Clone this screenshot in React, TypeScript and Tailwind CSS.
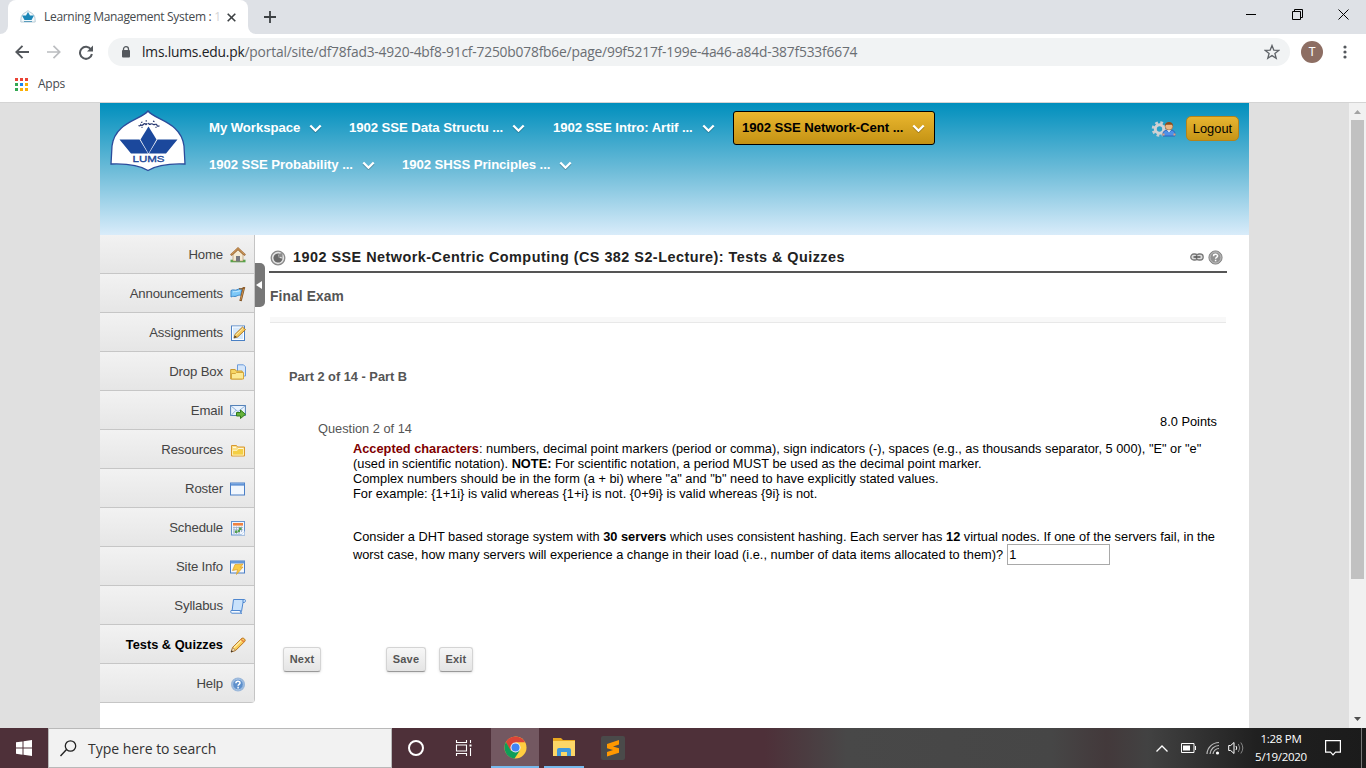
import React from "react";

const Chevron = () => (
  <svg className="mt-px h-[9px] w-[13px] shrink-0" viewBox="0 0 13 9">
    <path d="M1.3 2 6.5 7 11.7 2" transform="translate(0 .8)" fill="none" stroke="#00000040" strokeWidth="2.2" />
    <path d="M1.3 1.5 6.5 6.7 11.7 1.5" fill="none" stroke="#fff" strokeWidth="2.3" />
  </svg>
);

const NavItem = ({ label, width, className = "" }: { label: string; width: string; className?: string }) => (
  <div className={`flex items-center justify-between whitespace-nowrap text-[13.2px] font-bold tracking-[-0.080px] text-white ${width} ${className}`}>
    <span>{label}</span>
    <Chevron />
  </div>
);

const icons: Record<string, React.ReactNode> = {
  Home: (
    <>
      <path d="M.5 14h15" stroke="#56a34a" strokeWidth="2.6" />
      <path d="M3 7.5 8 3l5 4.5V14H3z" fill="#f4ead3" stroke="#b08b5a" strokeWidth=".6" />
      <path d="M6 14.500V9h4v5.500z" fill="#77777f" />
      <path d="M.8 8.3 8 1.6l7.2 6.7" fill="none" stroke="#a5713d" strokeWidth="2.2" />
      <path d="M1.500 7.500 8 1.500l6.500 6" fill="none" stroke="#dca866" strokeWidth=".8" />
    </>
  ),
  Announcements: (
    <>
      <path d="M1 4.500c2-1.500 4 .4 6-.7 2-1.200 3-1.200 5-.8l-1.300 6.300c-2-.5-3 .2-4.500.9-1.700.800-3-.600-5.200.800z" fill="#7cc8f8" stroke="#3b86c8" />
      <path d="M3 6c2-1 3 .5 7-1.300" stroke="#c6eaff" fill="none" />
      <path d="M14 1.300 10.500 15" stroke="#80501f" strokeWidth="2.400" />
      <path d="M13.800 2 10.700 14" stroke="#d59b57" strokeWidth=".9" />
      <path d="M9 2.600C11 3 13 3 15 1.600" stroke="#8d5b28" strokeWidth="1.200" fill="none" />
    </>
  ),
  Assignments: (
    <>
      <rect x="1.500" y="1" width="13" height="14.500" fill="#d7e9fb" stroke="#4a80c4" />
      <rect x="2.500" y="2" width="11" height="12.500" fill="none" stroke="#fff" />
      <path d="m4 13 1-3.600L12.500 2l3 2.600L7.700 12z" fill="#f6c95a" stroke="#a87425" strokeWidth=".9" />
      <path d="m5.200 10.500 8-7.300" stroke="#ffeeb0" />
      <path d="m4 13 .9-2.600 1.800 1.500z" fill="#4c3a22" />
    </>
  ),
  "Drop Box": (
    <>
      <path d="M7.500.800h6l2 2v9.200h-8z" fill="#d5e6fa" stroke="#6b9cdb" />
      <path d="M.700 5.500h4.500l1 1.500h6v8H.700z" fill="#f6d564" stroke="#c89a30" />
      <path d="M1.500 9.500h4l1-1h7v6.500h-12z" fill="#fce993" stroke="#d6a63a" />
    </>
  ),
  Email: (
    <>
      <rect x=".600" y="2.500" width="14.800" height="10" fill="#eaf3fd" stroke="#5582b8" />
      <path d="m1 3 7 5.600L15 3M1 12.500l5-5.300M15 12.500 10 7.200" fill="none" stroke="#8fb2dc" />
      <path d="M6.500 9.500h4V7l5 4.300-5 4.200V13h-4z" fill="#66b33c" stroke="#327a1d" />
    </>
  ),
  Resources: (
    <>
      <path d="M1.500 3.500h5l1 1.500h7v9h-13z" fill="#fae08a" stroke="#d9982f" />
      <path d="M2.500 8.500h4.500l1.500-2h5V13h-11z" fill="#f4cf45" stroke="#fff3bf" strokeWidth=".8" />
      <path d="M3 5.500h3M8 6.500h5" stroke="#fff8da" />
    </>
  ),
  Roster: (
    <>
      <rect x=".500" y="2" width="14" height="12" fill="#f2f7fd" stroke="#4b7fc6" />
      <path d="M.500 3.300h14" stroke="#5288d0" strokeWidth="2.600" />
      <path d="M1 2.800h13" stroke="#9cc0ee" strokeWidth=".8" />
    </>
  ),
  Schedule: (
    <>
      <rect x="1.500" y="1.500" width="13" height="13.500" fill="#f0f6fe" stroke="#6694cf" />
      <rect x="3" y="3" width="10" height="2.600" fill="#ef8240" />
      <path d="M3 7.500h10M3 9.800h10M3 12h7M4 6.500V14M6.500 6.500V14M9 6.500V14M11.500 6.500V12" stroke="#9aacc6" strokeWidth=".8" />
      <path d="M9 7.500h2.500V10H9zM5 10.500h2.500V13H5zM8 10h2v2H8z" fill="#55a04d" />
      <path d="m11 15 3.500-3.500V15z" fill="#fff" stroke="#a9c4e8" strokeWidth=".5" />
    </>
  ),
  "Site Info": (
    <>
      <rect x=".500" y="2" width="14" height="12" fill="#f5f8fc" stroke="#4b7fc6" />
      <path d="M.500 3.300h14" stroke="#6699da" strokeWidth="2.500" />
      <path d="m5 5.500 8-.500-2.500 3.300 2.500-.300-6.500 7.500 1-5-5 1z" fill="#f8ca45" stroke="#dc9d26" strokeWidth=".7" />
    </>
  ),
  Syllabus: (
    <>
      <path d="M3.500 1.500h11c1.500 0 1.300 3-.5 3h-1l-1.500 9H2z" fill="#c9e2fb" stroke="#4f87cf" />
      <path d="M1 12.500h9.500c-.500 2 .300 2.700 1.500 2.700H2C.700 15.200.500 13.500 1 12.500z" fill="#f5faff" stroke="#4f87cf" />
      <path d="M13 4.500V2" stroke="#4f87cf" />
    </>
  ),
  "Tests & Quizzes": (
    <>
      <path d="m1.200 15 1.500-4.700L12 1.200c1.300-.8 4 1.500 3 3L5.700 13.400z" fill="#f9cd5a" stroke="#b87523" />
      <path d="m3.800 10.700 8.700-8.300" stroke="#fff0ad" strokeWidth="1.300" />
      <path d="m11 2.200 3.100 2.900" stroke="#e9853f" strokeWidth="1.500" />
      <path d="m1.200 15 1.500-4.500 2.900 2.800z" fill="#f4dfb9" stroke="#9a7245" strokeWidth=".7" />
      <path d="m1 15.200.6-2 1.400 1.300z" fill="#222" />
    </>
  ),
  Help: (
    <>
      <circle cx="8" cy="8.500" r="6.400" fill="#5d8fcb" stroke="#9db9da" strokeWidth="1.300" />
      <circle cx="8" cy="8.500" r="5.300" fill="none" stroke="#d9e7f6" strokeWidth=".6" />
      <path d="M5.900 7.200C5.900 4.600 10 4.700 10 6.900c0 1.500-1.900 1.300-1.900 2.900M8.100 10.800v1.600" fill="none" stroke="#fff" strokeWidth="1.500" />
    </>
  ),
};

const menu = ["Home", "Announcements", "Assignments", "Drop Box", "Email", "Resources", "Roster", "Schedule", "Site Info", "Syllabus", "Tests & Quizzes", "Help"];

const Crest = ({ className }: { className: string }) => (
  <svg className={className} viewBox="0 0 76 62">
    <path d="M38 1C31 10 5 12 2 36L1 54q25-1 37 6.500Q50 53 75 54L74 36C71 12 45 10 38 1z" fill="#fff" stroke="#2b4c9b" strokeWidth="1.300" />
    <path d="M28.500 15.500q1.500 1 2.300-.8 1 1.600 2.500-.2t2.700.1q1-.1 1-1.600M38.500 12.800q.3 2 2 1.300t2.300.1 2.200.2 2 .900 2.500.4M31 12.500l1.500-.5M35.500 11l1.500-.2M43 11.200l1.500.4M31.500 17.300h1M45.500 17.300h1" fill="none" stroke="#25356f" strokeWidth="1.200" />
    <path d="M38.500 16.500 46.500 29.500 38.500 43.500 30.500 29.500z" fill="#1b489c" />
    <path d="M9.500 29.500h20L38 43.500H21zM67.500 29.500h-20L39 43.500h17z" fill="#1b489c" />
    <text x="38.500" y="51.500" textAnchor="middle" fontFamily="Liberation Sans, sans-serif" fontSize="9.200" textLength="32" lengthAdjust="spacingAndGlyphs" fill="#1c4797" stroke="#1c4797" strokeWidth=".35">LUMS</text>
  </svg>
);

const TabStrip = () => (
  <div className="flex h-[34px] bg-[#dee1e6]">
    <div className="flex w-2 items-end bg-white"><div className="h-full w-2 rounded-br-lg bg-[#dee1e6]" /></div>
    <div className="bg-[#dee1e6]">
      <div className="flex h-[34px] w-[240px] items-center rounded-t-lg bg-white pl-[12px]">
        <svg className="h-4 w-4 shrink-0" viewBox="0 0 16 16">
          <path d="M8 1.500C6 4 1.500 4 1 9.500L.800 13H15.200L15 9.500C14.500 4 10 4 8 1.500z" fill="#f3f9fc" stroke="#b7ccd7" />
          <path d="m8 3 2 3.500h4L11.500 11h-7L2 6.500h4z" fill="#1b87b8" />
          <path d="M4 12.500h8" stroke="#5b9dbd" />
        </svg>
        <span className="ml-2 w-[178px] shrink-0 whitespace-nowrap font-['Open_Sans',sans-serif] text-[12px] tracking-[-0.310px] text-[#45494d]">
          Learning Management System : <span className="text-[#d5d5d5]">1</span>
        </span>
        <svg className="ml-[5px] h-[9px] w-[9px] shrink-0" viewBox="0 0 9 9"><path d="m.700.700 7.600 7.600m0-7.600L.700 8.300" stroke="#3c4043" strokeWidth="1.600" /></svg>
      </div>
    </div>
    <div className="w-2 bg-white"><div className="h-full w-2 rounded-bl-lg bg-[#dee1e6]" /></div>
    <svg className="ml-2 mt-[11px] h-3 w-3" viewBox="0 0 12 12"><path d="M6 0v12M0 6h12" stroke="#3c4043" strokeWidth="1.800" /></svg>
    <div className="ml-auto mr-[17px] mt-[9px] flex items-start gap-[35.500px]">
      <svg className="h-[11px] w-[10px]" viewBox="0 0 10 11"><path d="M0 5.500h10" stroke="#000" /></svg>
      <svg className="h-[11px] w-[11px]" viewBox="0 0 11 11"><path d="M.500 2.500h8v8h-8zM2.500 2.500v-2h8v8h-2" fill="none" stroke="#000" /></svg>
      <svg className="h-[11px] w-[11px]" viewBox="0 0 11 11"><path d="m.500.500 10 10m0-10-10 10" stroke="#000" /></svg>
    </div>
  </div>
);

const Toolbar = () => (
  <div className="flex h-[36px] items-center bg-white pl-[15px]">
    <svg className="h-[14px] w-[14px]" viewBox="0 0 14 14"><path d="M14 7H1.500M7.500.800 1.300 7l6.200 6.200" fill="none" stroke="#54585d" strokeWidth="1.900" /></svg>
    <svg className="ml-[18px] h-[14px] w-[14px]" viewBox="0 0 14 14"><path d="M0 7h12.500M6.500.800 12.700 7l-6.200 6.200" fill="none" stroke="#bbbdc0" strokeWidth="1.700" /></svg>
    <svg className="ml-[18px] h-[15px] w-[14px]" viewBox="0 0 14 15"><path d="M12 4.500A6 6 0 1 0 12.900 9" fill="none" stroke="#54585d" strokeWidth="2" /><path d="M14 .500v6H8z" fill="#54585d" /></svg>
    <div className="ml-[15px] flex h-7 w-[1182px] items-center rounded-full bg-[#f1f3f4] pl-[13px] pr-[10px]">
      <svg className="h-[12px] w-[10px]" viewBox="0 0 10 12"><path d="M2.500 5V3a2.500 2.300 0 0 1 5 0v2" fill="none" stroke="#54585d" strokeWidth="1.300" /><rect x="1" y="4" width="8" height="7.500" rx="1" fill="#54585d" /></svg>
      <span className="ml-[11px] whitespace-nowrap font-['Open_Sans',sans-serif] text-[13.800px] tracking-[-0.190px] text-[#6a6e73]"><span className="text-[#202124]">lms.lums.edu.pk</span>/portal/site/df78fad3-4920-4bf8-91cf-7250b078fb6e/page/99f5217f-199e-4a46-a84d-387f533f6674</span>
      <svg className="ml-auto h-[16px] w-[16px]" viewBox="0 0 16 16"><path d="m8 1.500 1.800 4.600 4.900.3-3.800 3.100 1.300 4.800L8 11.600l-4.200 2.700 1.300-4.800-3.800-3.100 4.900-.3z" fill="none" stroke="#5f6368" strokeWidth="1.300" /></svg>
    </div>
    <div className="ml-[11px] flex h-[22px] w-[22px] items-center justify-center rounded-full bg-[#8d6e63] font-['Roboto',sans-serif] text-[12px] text-white">T</div>
    <svg className="ml-[20px] h-[14px] w-[4px]" viewBox="0 0 4 14"><circle cx="2" cy="2" r="1.600" fill="#54585d" /><circle cx="2" cy="7" r="1.600" fill="#54585d" /><circle cx="2" cy="12" r="1.600" fill="#54585d" /></svg>
  </div>
);

const Bookmarks = () => (
  <div className="flex h-[33px] items-center border-b border-[#d4d4d4] bg-white pl-[15px] pb-[4px]">
    <div className="grid grid-cols-3 gap-[2px]">
      {["bg-[#ea4335]", "bg-[#ea4335]", "bg-[#ea4335]", "bg-[#34a853]", "bg-[#1a84f0]", "bg-[#fbaf05]", "bg-[#34a853]", "bg-[#fbaf05]", "bg-[#fbaf05]"].map((c, i) => (
        <i key={i} className={`h-[3px] w-[3px] ${c}`} />
      ))}
    </div>
    <span className="ml-[10px] font-['Open_Sans',sans-serif] text-[12px] tracking-[-0.250px] text-[#45494d]">Apps</span>
  </div>
);

const PortalHeader = () => (
  <div className="flex h-[132px] bg-[linear-gradient(to_bottom,#008fbd,#6bbbd8_50%,#d9ecfa)]">
    <Crest className="ml-[10px] mt-[7px] h-[62px] w-[76px] shrink-0" />
    <div className="ml-[23px] flex flex-col">
      <div className="mt-[8px] flex h-[34px] items-center">
        <NavItem label="My Workspace" width="w-[113px]" />
        <NavItem label="1902 SSE Data Structu ..." width="w-[176px]" className="ml-[27px]" />
        <NavItem label="1902 SSE Intro: Artif ..." width="w-[162px]" className="ml-[28px]" />
        <div className="ml-[18px] h-[34px] w-[202px] rounded-[3px] border border-black bg-linear-to-b from-[#ebb72e] to-[#c39213] pl-[8px]">
          <NavItem label="1902 SSE Network-Cent ..." width="w-[183px]" className="h-[32px] text-black!" />
        </div>
      </div>
      <div className="mt-[3px] flex h-[34px] items-center">
        <NavItem label="1902 SSE Probability ..." width="w-[166px]" />
        <NavItem label="1902 SHSS Principles ..." width="w-[170px]" className="ml-[27px]" />
      </div>
    </div>
    <div className="ml-auto mr-[10px] mt-[13px] flex h-[25px] items-center">
      <svg className="h-[16px] w-[25px]" viewBox="0 0 25 16">
        <circle cx="8.500" cy="8" r="6.300" fill="none" stroke="#c9cccf" strokeWidth="3" strokeDasharray="2.600 2.350" />
        <circle cx="8.500" cy="8" r="4.200" fill="none" stroke="#d0d2d4" strokeWidth="3" />
        <path d="M12 15c-.5-3 .5-5 3-6l3 2 3-2c2.500 1 3.500 3 3 6z" fill="#4f91e8" stroke="#2d65bd" />
        <path d="M11.500 13.500h2M22.500 13.500h2" stroke="#e6a074" strokeWidth="2" />
        <path d="m16 9 2 2.500L20 9z" fill="#fff" />
        <circle cx="18" cy="5.300" r="3.800" fill="#edb885" stroke="#9a6234" strokeWidth=".6" />
        <path d="M13.900 5C13.800-.500 22.200-.500 22.100 5l-1-1.200h-6z" fill="#8a4c1d" />
      </svg>
      <div className="ml-[10px] flex h-[25px] w-[53px] items-center justify-center rounded-[5px] border border-[#b4831a] bg-linear-to-b from-[#e8b530] to-[#c69516] text-[12.8px] tracking-[0.050px] text-black">Logout</div>
    </div>
  </div>
);

const Sidebar = () => (
  <div className="h-[468px] w-[155px] shrink-0 overflow-hidden rounded-br-[4px] border-r border-[#c4c4c4]">
    {menu.map((m) => (
      <div key={m} className={`flex h-[39px] items-center justify-end border-b border-[#c6c6c6] bg-linear-to-b from-[#f2f2f2] to-[#e6e6e6] pr-[8px] ${m === "Tests & Quizzes" ? "text-[12.8px] font-bold text-black" : "text-[13.2px] tracking-[-0.150px] text-[#444]"}`}>
        <span className="pt-px">{m}</span>
        <svg className="ml-[7px] mt-[2px] h-4 w-4" viewBox="0 0 16 16">{icons[m]}</svg>
      </div>
    ))}
  </div>
);

const FormButton = ({ label, className }: { label: string; className: string }) => (
  <button className={`h-[25px] rounded-[3px] border border-[#d4d4d4] border-b-[#999] bg-linear-to-b from-[#f7f7f7] to-[#e4e4e4] text-[11px] font-bold tracking-[0.2px] text-[#555] shadow-sm ${className}`}>{label}</button>
);

const Main = () => (
  <div className="flex grow flex-col">
    <div className="ml-[4px] mr-[22px] flex h-[38px] items-center border-b-2 border-[#555] pt-[8px]">
      <svg className="ml-px mt-px h-4 w-4" viewBox="0 0 16 16">
        <circle cx="8" cy="8" r="6.800" fill="#e4e4e4" stroke="#8a8a8a" strokeWidth="1.300" />
        <path d="M9 3.500A4.600 4.600 0 1 0 12.600 8.500L9.500 8 8 6.500z" fill="#6a6a6a" />
        <path d="M7.500 4 12.500 3v5.200L10.800 6.800 9.300 8 7.700 6.200 9 5.200z" fill="#8a8a8a" />
      </svg>
      <h1 className="ml-[7px] whitespace-nowrap pt-[2px] text-[14.4px] font-bold tracking-[0.480px] text-[#222]">1902 SSE Network-Centric Computing (CS 382 S2-Lecture): Tests &amp; Quizzes</h1>
      <svg className="ml-auto h-[8px] w-[14px]" viewBox="0 0 14 8">
        <rect x=".800" y="1" width="7" height="6" rx="3" fill="#ddd" stroke="#777" strokeWidth="1.300" />
        <rect x="6.200" y="1" width="7" height="6" rx="3" fill="#ddd" stroke="#777" strokeWidth="1.300" />
        <path d="M3.500 4h7" stroke="#555" strokeWidth="1.500" />
      </svg>
      <svg className="ml-[4px] mr-[4px] h-[15px] w-[15px]" viewBox="0 0 15 15">
        <circle cx="7.500" cy="7.500" r="6.600" fill="#929292" stroke="#858585" />
        <circle cx="7.500" cy="7.500" r="5.500" fill="none" stroke="#c8c8c8" strokeWidth=".8" />
        <path d="M5.500 6.200C5.500 3.700 9.600 3.800 9.600 6c0 1.500-2 1.200-2 2.700M7.600 9.700v1.500" fill="none" stroke="#fff" strokeWidth="1.500" />
      </svg>
    </div>
    <div className="ml-[5px] mr-[23px] h-[50px] border-b border-[#e8e8e8]">
      <div className="flex h-[44px] items-center pt-[5px] text-[13.8px] font-bold tracking-[0.100px] text-[#555]">Final Exam</div>
      <div className="h-[5px] bg-[#f8f8f8]" />
    </div>
    <div className="ml-[24px] mt-[46px] text-[12.8px] font-bold leading-[15px] text-[#555]">Part 2 of 14 - Part B</div>
    <div className="ml-[53px] mr-[32px] mt-[30px] flex h-[27px] justify-between text-[12.8px] leading-[15px]">
      <span className="pt-[7px] text-[#555]">Question 2 of 14</span>
      <span className="text-black">8.0 Points</span>
    </div>
    <div className="ml-[88px] whitespace-nowrap text-[12.8px] leading-[15px] text-black">
      <p><b className="text-[#800000]">Accepted characters</b>: numbers, decimal point markers (period or comma), sign indicators (-), spaces (e.g., as thousands separator, 5 000), "E" or "e"</p>
      <p>(used in scientific notation). <b>NOTE:</b> For scientific notation, a period MUST be used as the decimal point marker.</p>
      <p>Complex numbers should be in the form (a + bi) where "a" and "b" need to have explicitly stated values.</p>
      <p>For example: {"{1+1i}"} is valid whereas {"{1+i}"} is not. {"{0+9i}"} is valid whereas {"{9i}"} is not.</p>
      <p className="mt-[28px]">Consider a DHT based storage system with <b>30 servers</b> which uses consistent hashing. Each server has <b>12</b> virtual nodes. If one of the servers fail, in the</p>
      <div className="flex h-[21px] items-center">
        <span>worst case, how many servers will experience a change in their load (i.e., number of data items allocated to them)?</span>
        <input readOnly defaultValue="1" className="ml-[4px] h-[21px] w-[103px] border border-[#a9a9a9] pl-px text-[12.8px] outline-none" />
      </div>
    </div>
    <div className="ml-[18px] mt-[82px] flex">
      <FormButton label="Next" className="w-[38px]" />
      <FormButton label="Save" className="ml-[65px] w-[40px]" />
      <FormButton label="Exit" className="ml-[13px] w-[34px]" />
    </div>
  </div>
);

const Taskbar = () => (
  <div className="flex h-[40px] bg-[linear-gradient(to_right,#4e3039_56%,#484848_62%,#464646_77%,#43393b_81%,#424242_84%,#202020_92%,#1b1b1b)] text-white">
    <div className="flex w-[48px] items-center justify-center">
      <svg className="h-4 w-4" viewBox="0 0 16 16"><path d="M0 2.300 6.500 1.400v6.200H0zM7.500 1.200 16 0v7.600H7.500zM0 8.500h6.500v6.200L0 13.800zM7.500 8.500H16V16l-8.500-1.200z" fill="#fff" /></svg>
    </div>
    <div className="flex w-[344px] items-center border border-[#b9b9b9] bg-[#f2f2f2] pl-[11px]">
      <svg className="h-[17px] w-[17px]" viewBox="0 0 17 17"><circle cx="10.500" cy="6" r="5.200" fill="none" stroke="#222" strokeWidth="1.300" /><path d="M6.500 9.500.500 16" stroke="#222" strokeWidth="1.400" /></svg>
      <span className="ml-[11px] font-['Open_Sans',sans-serif] text-[14px] tracking-[-0.030px] text-[#333]">Type here to search</span>
    </div>
    <div className="flex w-[48px] items-center justify-center"><i className="h-4 w-4 rounded-full border-2 border-white" /></div>
    <div className="flex w-[51px] items-center justify-center pr-[4px]">
      <svg className="h-[16px] w-[17px]" viewBox="0 0 17 16"><path d="M1.500 0v2.500h10V0M1.500 16v-2.500h10V16M1.500 5h10v6h-10zM15.500 0v3M15.500 8v8" fill="none" stroke="#fff" strokeWidth="1.100" /><path d="M14.500 4.500h2v2h-2z" fill="#fff" /></svg>
    </div>
    <div className="flex w-[48px] items-center justify-center border-b-2 border-[#76b9ed] bg-[#735861]">
      <svg className="h-[23px] w-[23px]" viewBox="0 0 24 24">
        <circle cx="12" cy="12" r="11.500" fill="#ffcd40" />
        <path d="M12 12 6.500 15.500 2 6.300A11.500 11.500 0 0 1 22 6.500H12z" fill="#db4437" />
        <path d="M2 6.300A11.500 11.500 0 0 0 11 23.500L16.500 15H7z" fill="#0f9d58" />
        <circle cx="12" cy="12" r="5.300" fill="#f1f1f1" /><circle cx="12" cy="12" r="4.200" fill="#4285f4" />
      </svg>
    </div>
    <div className="ml-[5px] flex w-[40px] items-center justify-center border-b-2 border-[#76b9ed]">
      <svg className="h-[18px] w-[22px]" viewBox="0 0 22 18"><path d="M0 0h8l2 2h12v16H0z" fill="#e9a820" /><path d="M0 3h22v15H0z" fill="#fcd667" /><path d="M4 18v-6q0-2 2-2h10q2 0 2 2v6h-4v-4H8v4z" fill="#3f98dc" /></svg>
    </div>
    <div className="flex w-[58px] items-center justify-center">
      <svg className="h-6 w-6" viewBox="0 0 24 24"><rect width="24" height="24" rx="2" fill="#4a4a4a" /><path d="M18 4v4.500l-6 2 6 1.800v4.400L6 20.500V16l6-2-6-1.800V8z" fill="#ff9800" /></svg>
    </div>
    <div className="ml-auto flex items-center">
      <svg className="h-[7px] w-[12px]" viewBox="0 0 12 7"><path d="m.500 6.500 5.500-5.500 5.500 5.500" fill="none" stroke="#fff" strokeWidth="1.300" /></svg>
      <svg className="ml-[13px] h-[10px] w-[15px]" viewBox="0 0 15 10"><path d="M.500.500h12.500v9H.500zM14.500 3v4" fill="none" stroke="#fff" /><path d="M2 2.500h7v5H2z" fill="#fff" /></svg>
      <svg className="ml-[10px] h-[14px] w-[14px]" viewBox="0 0 14 14"><path d="M1 13A12 12 0 0 1 13 1.500M4 13a9 9 0 0 1 9-8.500M7 13a6 6 0 0 1 6-5.500" fill="none" stroke="#bbb" strokeWidth="1.200" /><circle cx="11.500" cy="12" r="1.600" fill="#fff" /></svg>
      <svg className="ml-[8px] h-[14px] w-[16px]" viewBox="0 0 16 14"><path d="M.700 4.500h2L6 1.500v11L2.700 9.500h-2z" fill="none" stroke="#fff" /><path d="M8 5q1.500 2 0 4" fill="none" stroke="#fff" /><path d="M10.300 3q3 4 0 8M12.800 1.500q4 5.500 0 11" fill="none" stroke="#888" /></svg>
      <div className="ml-[8px] w-[58px] whitespace-nowrap text-center font-['Open_Sans',sans-serif] text-[11.500px] leading-[18px] tracking-[-0.300px]">1:28 PM<br />5/19/2020</div>
      <svg className="ml-[15px] h-[16px] w-[16px]" viewBox="0 0 16 16"><path d="M.600.600h14.800v11.500h-4.900L8 14.800l-2.500-2.700H.600z" fill="none" stroke="#fff" strokeWidth="1.200" /></svg>
      <i className="ml-[20px] mr-[4px] h-[40px] w-px bg-[#777]" />
    </div>
  </div>
);

export default function App() {
  return (
    <div className="flex h-[768px] w-[1366px] flex-col overflow-hidden font-['Liberation_Sans',Arial,sans-serif]">
      <TabStrip />
      <Toolbar />
      <Bookmarks />
      <div className="flex h-[625px] bg-[#e0e0e0]">
        <div className="ml-[100px] w-[1149px] bg-white">
          <PortalHeader />
          <div className="flex">
            <Sidebar />
            <div className="mt-[28px] flex h-[44px] w-[10px] shrink-0 items-center justify-center rounded-r-[5px] bg-[#777]">
              <svg className="mr-[2px] h-[8px] w-[6px]" viewBox="0 0 6 8"><path d="M6 0v8L0 4z" fill="#fff" /></svg>
            </div>
            <Main />
          </div>
        </div>
        <div className="ml-auto flex w-[17px] flex-col items-center bg-[#f1f1f1]">
          <svg className="mt-[7px] h-[4px] w-[7px]" viewBox="0 0 7 4"><path d="M0 4 3.500 0 7 4z" fill="#a3a3a3" /></svg>
          <div className="mt-[6px] h-[459px] w-[13px] bg-[#c1c1c1]" />
          <svg className="mb-[7px] mt-auto h-[4px] w-[7px]" viewBox="0 0 7 4"><path d="M0 0 3.500 4 7 0z" fill="#505050" /></svg>
        </div>
      </div>
      <Taskbar />
    </div>
  );
}
